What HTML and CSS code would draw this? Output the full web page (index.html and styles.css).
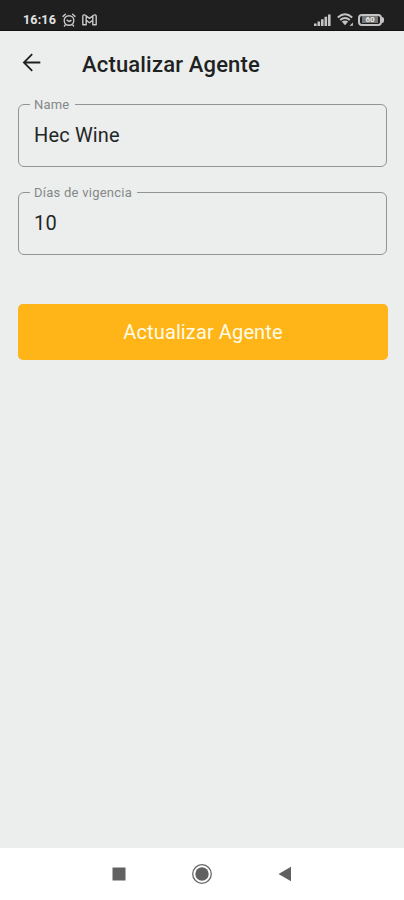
FILE: index.html
```html
<!DOCTYPE html>
<html lang="es">
<head>
<meta charset="utf-8">
<title>Actualizar Agente</title>
<link rel="stylesheet" href="styles.css">
</head>
<body>
<div class="screen">
  <div class="status">
    <span class="clock">16:16</span>
    <svg class="alarm" width="14" height="14" viewBox="0 0 14 14" fill="none" stroke="#c8c8c8" stroke-width="1.4" stroke-linecap="round">
      <circle cx="7" cy="7.5" r="4.8"/><path d="M1 3.4 3.4 1.3M13 3.4 10.6 1.3M3.2 12 2.4 13M10.8 12l.8 1M5 7.2l2 1.3 2-1"/>
    </svg>
    <svg class="mail" width="15" height="12" viewBox="0 0 15 12" fill="none" stroke="#c8c8c8" stroke-width="1.4" stroke-linejoin="round">
      <path d="M.8 10.8V2.3C.8.8 2.4.5 3.4 1.3L7.5 4.4l4.1-3.1c1-.8 2.6-.5 2.6 1v8.5h-3.4V6.2L7.5 8.7 4.2 6.2v4.6ZM4.2 6.2V2M10.8 6.2V2"/>
    </svg>
    <div class="indicators">
      <svg width="17" height="12" viewBox="0 0 17 12" fill="#c4c4c4">
        <path d="M0 9.5h2.6V12H0zM3.5 7.5h2.6V12H3.5zM7 5.2h2.6V12H7zM10.5 2.8h2.6V12h-2.6zM14 .5h2.6V12H14z"/>
      </svg>
      <svg width="17" height="13" viewBox="0 0 17 13" fill="none" stroke="#c4c4c4" stroke-width="1.9">
        <path d="M.8 4.5Q8-1.8 15.2 4.5M3.2 7.1q4.8-4 9.6 0"/><path d="M4.8 8.6Q8 6.3 11.2 8.6L8 12.2zM12.5 12.8h3.4V9.4z" fill="#c4c4c4" stroke="none"/>
      </svg>
      <div class="battery"><span>60</span></div>
    </div>
  </div>
  <header class="bar">
    <svg width="20" height="20" viewBox="0 0 20 20" fill="none" stroke="#202222" stroke-width="1.8">
      <path d="M18.3 9.5H2.2M10.2 1.2 1.9 9.5l8.3 8.3"/>
    </svg>
    <h1>Actualizar Agente</h1>
  </header>
  <main class="form">
    <fieldset class="field"><legend class="name">Name</legend><div class="value">Hec Wine</div></fieldset>
    <fieldset class="field"><legend class="days">Días de vigencia</legend><div class="value">10</div></fieldset>
    <button class="submit" type="button">Actualizar Agente</button>
  </main>
  <nav class="nav">
    <svg width="14" height="14" viewBox="0 0 14 14"><path d="M.5.5h13v13H.5z" fill="#616161"/></svg>
    <svg width="22" height="22" viewBox="0 0 22 22"><circle cx="11" cy="11" r="9.3" fill="none" stroke="#686868" stroke-width="1.3"/><circle cx="11" cy="11" r="6.7" fill="#616161"/></svg>
    <svg width="14" height="16" viewBox="0 0 14 16"><path d="M.5 8 13 .8v14.4z" fill="#616161"/></svg>
  </nav>
</div>
</body>
</html>
```
FILE: styles.css
```css
* { box-sizing: border-box; }
body { margin: 0; font-family: Roboto, sans-serif; }
svg { display: block; flex: none; }
.screen {
  display: flex;
  flex-direction: column;
  width: 404px;
  height: 900px;
  overflow: hidden;
  background: #ebeeed;
}
.status {
  display: flex;
  align-items: center;
  height: 31px;
  padding: 9px 20px 0 23px;
  background: #1f1f1f;
  border-bottom: 1px solid #111;
}
.clock {
  width: 34px;
  color: #e4e4e4;
  font-size: 12.5px;
  font-weight: 700;
  line-height: 14px;
  letter-spacing: 0.15px;
}
.alarm { margin-left: 5px; }
.mail { margin-left: 6px; }
.indicators { display: flex; align-items: center; gap: 6px; margin-left: auto; }
.battery {
  position: relative;
  display: flex;
  align-items: center;
  justify-content: center;
  width: 24px;
  height: 12px;
  margin-right: 2px;
  margin-left: -2px;
  border: 2px solid #c4c4c4;
  border-radius: 4px;
}
.battery::after {
  content: "";
  position: absolute;
  right: -4px;
  top: 1px;
  width: 2px;
  height: 6px;
  border-radius: 0 2px 2px 0;
  background: #c4c4c4;
}
.battery span {
  width: 16px;
  height: 7px;
  background: #777;
  color: #eee;
  font-size: 8px;
  font-weight: 700;
  line-height: 7px;
  text-align: center;
}
.bar {
  display: flex;
  align-items: center;
  height: 65px;
  padding: 0 0 1px 22px;
}
.bar h1 {
  margin: 3px 0 0 40px;
  color: #202222;
  font-size: 22px;
  font-weight: 500;
  line-height: 28px;
  letter-spacing: 0.17px;
  white-space: nowrap;
}
.form {
  display: flex;
  flex: 1;
  flex-direction: column;
  padding: 0 17px 0 18px;
}
.field {
  min-width: 0;
  height: 71px;
  margin: 0 0 17px;
  padding: 0 15px 0 11px;
  border: 1px solid #929494;
  border-radius: 6px;
}
.field legend {
  height: 16px;
  padding: 0 4px;
  color: #858888;
  font-size: 13px;
  line-height: 18px;
  white-space: nowrap;
}
.name { width: 45px; letter-spacing: 0.2px; }
.days { width: 107px; letter-spacing: 0.25px; }
.value {
  padding: 10px 4px 0;
  color: #242626;
  font-size: 20px;
  line-height: 26px;
  letter-spacing: 0.15px;
}
.submit {
  height: 56px;
  margin: 32px -1px 0 0;
  padding: 0;
  border: 0;
  border-radius: 5px;
  background: #ffb517;
  color: #fffbe9;
  font-family: inherit;
  font-size: 20px;
  line-height: 28px;
  letter-spacing: 0.12px;
}
.nav {
  display: flex;
  align-items: center;
  justify-content: space-between;
  height: 52px;
  padding: 0 112px;
  background: #fff;
}
```
